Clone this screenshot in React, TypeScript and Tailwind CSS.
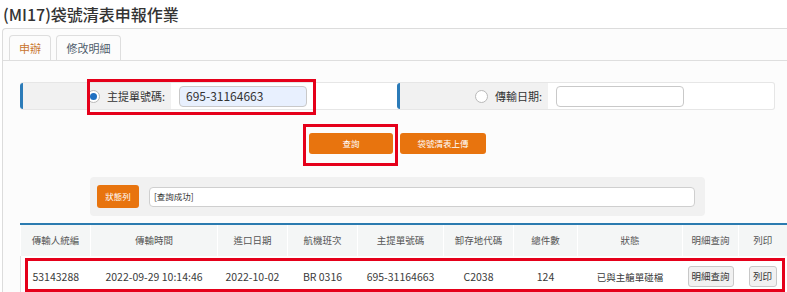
import React from "react";

const cols = [
  { label: "傳輸人統編", w: "w-[70px]" },
  { label: "傳輸時間", w: "w-[127px]" },
  { label: "進口日期", w: "w-[70px]" },
  { label: "航機班次", w: "w-[70px]" },
  { label: "主提單號碼", w: "w-[86px]" },
  { label: "卸存地代碼", w: "w-[70px]" },
  { label: "總件數", w: "w-[64px]" },
  { label: "狀態", w: "w-[105px]" },
  { label: "明細查詢", w: "w-[56px]" },
  { label: "列印", w: "w-[48px]" },
];

const row = [
  "53143288",
  "2022-09-29 10:14:46",
  "2022-10-02",
  "BR 0316",
  "695-31164663",
  "C2038",
  "124",
  "已與主艙單碰檔",
];

function Radio({ checked }: { checked?: boolean }) {
  return (
    <span className="flex h-[13px] w-[13px] items-center justify-center rounded-full border border-[#b9b9b9] bg-white">
      {checked && <span className="h-[7px] w-[7px] rounded-full bg-[#1f6fc1]" />}
    </span>
  );
}

function QueryCell({
  label,
  value,
  checked,
  filled,
}: {
  label: string;
  value: string;
  checked?: boolean;
  filled?: boolean;
}) {
  return (
    <div className="flex h-full w-[377px] items-stretch">
      <div className="flex w-[151px] items-center justify-end gap-[7px] rounded-l-[3px] border-l-[3px] border-[#2b7bb8] bg-[#f1f1f1] pr-[6px]">
        <Radio checked={checked} />
        <span className="text-[11px] text-[#333]">{label}</span>
      </div>
      <div className="flex items-center pl-[8px]">
        <div
          className={`flex h-[21px] w-[128px] items-center rounded-[4px] border border-[#c9c9c9] px-[6px] text-[12px] text-[#333] ${
            filled ? "bg-[#e8f0fe]" : "bg-white"
          }`}
        >
          {value}
        </div>
      </div>
    </div>
  );
}

export default function App() {
  return (
    <div className="relative h-[292px] w-[787px] overflow-hidden bg-white font-['Noto_Sans_CJK_TC',sans-serif] text-[#333]">
      <div className="flex h-[28px] items-center pl-[3px] text-[16px] font-medium text-[#333]">
        (MI17)袋號清表申報作業
      </div>

      <div className="ml-[2px] h-[264px] rounded-tl-[4px] border-l border-t border-[#dcdcdc] bg-[#fcfcfc]">
        {/* tabs */}
        <div className="flex gap-[5px] border-b border-[#dedede] pl-[6px] pt-[6px]">
          <div className="-mb-px flex h-[25px] w-[42px] items-center justify-center rounded-t-[4px] border border-b-0 border-[#dedede] bg-[#fcfcfc] text-[11px] text-[#c8752e]">
            申辦
          </div>
          <div className="flex h-[25px] w-[65px] items-center justify-center rounded-t-[4px] border border-b-0 border-[#dedede] bg-[#fcfcfc] text-[11px] text-[#4f5d6b]">
            修改明細
          </div>
        </div>

        <div className="flex w-[772px] flex-col pl-[17px] pt-[21px]">
          {/* query row */}
          <div className="flex h-[28px] w-[755px] rounded-[3px] border border-l-0 border-[#e6e6e6] bg-white">
            <QueryCell label="主提單號碼:" value="695-31164663" checked filled />
            <QueryCell label="傳輸日期:" value="" />
          </div>

          {/* buttons */}
          <div className="mt-[23px] flex w-[755px] justify-center gap-[7px]">
            <button className="flex h-[21px] w-[84px] items-center justify-center rounded-[3px] bg-[#e8740e] text-[8.5px] text-white">
              查詢
            </button>
            <button className="flex h-[21px] w-[86px] items-center justify-center rounded-[3px] bg-[#e8740e] text-[8.5px] text-white">
              袋號清表上傳
            </button>
          </div>

          {/* status bar */}
          <div className="mx-auto mt-[23px] flex h-[39px] w-[615px] items-center gap-[10px] rounded-[4px] bg-[#f1f1f1] pl-[7px] pr-[10px]">
            <span className="flex h-[23px] w-[42px] items-center justify-center rounded-[3px] bg-[#e8740e] text-[8.5px] text-white">
              狀態列
            </span>
            <div className="flex h-[20px] flex-1 items-center rounded-[4px] border border-[#cfcfcf] bg-white px-[4px] text-[8.5px] text-[#333]">
              [查詢成功]
            </div>
          </div>

          {/* result table */}
          <table className="mt-[7px] w-[766px] table-fixed border-collapse">
            <thead>
              <tr className="h-[32px]">
                {cols.map((c) => (
                  <th
                    key={c.label}
                    className={`${c.w} border-l border-t-2 border-l-white border-t-[#2b7bb0] bg-[#f4f6f6] text-[9.5px] font-normal text-[#555]`}
                  >
                    {c.label}
                  </th>
                ))}
              </tr>
            </thead>
            <tbody>
              <tr className="h-[40px] border-l border-[#e0e0e0] bg-white">
                {row.map((v, i) => (
                  <td
                    key={i}
                    className={`pt-[2px] text-center ${
                      i === 7 ? "text-[9.5px]" : "text-[10.5px]"
                    } text-[#3a3a3a]`}
                  >
                    {v}
                  </td>
                ))}
                <td className="pb-[4px] text-center">
                  <span className="inline-flex h-[21px] w-[46px] items-center justify-center rounded-[3px] border border-[#c8c8c8] bg-[#f1f1f1] text-[9.5px] text-[#333]">
                    明細查詢
                  </span>
                </td>
                <td className="pb-[4px] text-center">
                  <span className="inline-flex h-[21px] w-[28px] items-center justify-center rounded-[3px] border border-[#c8c8c8] bg-[#f1f1f1] text-[9.5px] text-[#333]">
                    列印
                  </span>
                </td>
              </tr>
            </tbody>
          </table>
        </div>
      </div>

      {/* red annotation boxes */}
      <div className="pointer-events-none absolute left-[87px] top-[79px] h-[36px] w-[229px] border-[3px] border-[#e5001a]" />
      <div className="pointer-events-none absolute left-[303px] top-[124px] h-[42px] w-[95px] border-[3px] border-[#e5001a]" />
      <div className="pointer-events-none absolute left-[25px] top-[258px] h-[34px] w-[760px] border-[3px] border-[#e5001a]" />
    </div>
  );
}
